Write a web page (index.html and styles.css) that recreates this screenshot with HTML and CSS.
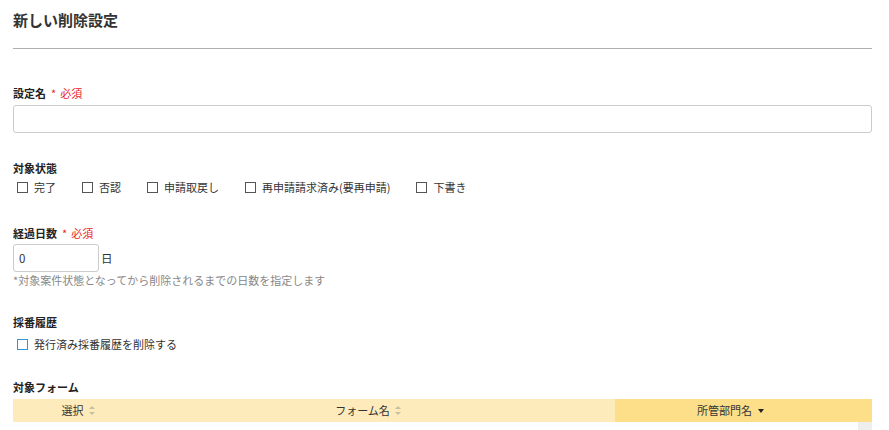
FILE: index.html
```html
<!DOCTYPE html>
<html lang="ja">
<head>
<meta charset="utf-8">
<title>新しい削除設定</title>
<link rel="stylesheet" href="styles.css">
</head>
<body>
<div class="page">
  <h1 class="title">新しい削除設定</h1>
  <hr class="divider">

  <div class="field field-name">
    <div class="label">設定名<span class="req"><span class="star">*</span>必須</span></div>
    <input class="text-input" type="text">
  </div>

  <div class="field field-status">
    <div class="label">対象状態</div>
    <div class="check-row">
      <label class="check"><span class="box"></span>完了</label>
      <label class="check"><span class="box"></span>否認</label>
      <label class="check"><span class="box"></span>申請取戻し</label>
      <label class="check"><span class="box"></span>再申請請求済み(要再申請)</label>
      <label class="check"><span class="box"></span>下書き</label>
    </div>
  </div>

  <div class="field field-days">
    <div class="label">経過日数<span class="req"><span class="star">*</span>必須</span></div>
    <div class="days-row">
      <input class="num-input" type="text" value="0"><span class="unit">日</span>
    </div>
    <div class="hint">*対象案件状態となってから削除されるまでの日数を指定します</div>
  </div>

  <div class="field field-history">
    <div class="label">採番履歴</div>
    <div class="check-row history-row">
      <label class="check"><span class="box box-focus"></span>発行済み採番履歴を削除する</label>
    </div>
  </div>

  <div class="field field-forms">
    <div class="label">対象フォーム</div>
    <div class="table-head">
      <div class="th th-select">選択<span class="sort"></span></div>
      <div class="th th-form">フォーム名<span class="sort"></span></div>
      <div class="th th-dept">所管部門名<span class="sort-desc"></span></div>
    </div>
    <div class="table-body">
      <div class="scroll-stub"></div>
    </div>
  </div>
</div>
</body>
</html>
```

FILE: styles.css
```css
* { box-sizing: border-box; }

html, body {
  margin: 0;
  padding: 0;
  background: #fff;
}

body {
  font-family: "Noto Sans CJK JP", "Noto Sans", sans-serif;
  font-size: 11px;
  color: #333;
}

.page {
  padding: 0 17px 0 13px;
}

.title {
  margin: 0;
  padding-top: 10px;
  font-size: 15px;
  line-height: 20px;
  font-weight: bold;
  color: #333;
}

.divider {
  margin: 18px 0 0;
  border: 0;
  border-top: 1px solid #aeaeae;
  height: 0;
}

.label {
  font-weight: bold;
  line-height: 16px;
  color: #222;
}

.req {
  color: #e8262a;
  font-weight: normal;
  margin-left: 5px;
}

.star {
  margin-right: 4px;
}

.field-name { margin-top: 36px; }

.text-input {
  display: block;
  width: 100%;
  height: 28px;
  margin-top: 4px;
  border: 1px solid #ccc;
  border-radius: 3px;
  padding: 0 6px;
  font: inherit;
  outline: none;
}

.field-status { margin-top: 27px; }

.check-row {
  display: flex;
  margin-top: 3px;
  padding-left: 4px;
  line-height: 16px;
}

.check {
  display: flex;
  align-items: center;
  margin-right: 26px;
  color: #333;
}

.box {
  width: 11px;
  height: 11px;
  border: 1px solid #555;
  margin-right: 6px;
  background: #fff;
}

.box-focus {
  border-color: #2f93d4;
}

.field-days { margin-top: 30px; }

.days-row {
  display: flex;
  align-items: center;
  margin-top: 3px;
}

.num-input {
  width: 86px;
  height: 28px;
  border: 1px solid #ccc;
  border-radius: 3px;
  padding: 0 5px;
  font: inherit;
  font-size: 11.5px;
  color: #333;
  outline: none;
}

.unit {
  margin-left: 2px;
  font-size: 11.5px;
}

.hint {
  line-height: 16px;
  color: #888;
}

.field-history { margin-top: 26px; }

.history-row { margin-top: 6px; }

.field-forms { margin-top: 27px; }

.table-head {
  display: flex;
  height: 23px;
  margin-top: 4px;
  background: #fdebbb;
}

.th {
  display: flex;
  align-items: center;
  justify-content: center;
  line-height: 23px;
  color: #333;
}

.th-select { width: 133px; padding-right: 2px; }
.th-form { width: 469px; padding-right: 24px; }
.th-dept { flex: 1; background: #fddf8a; padding-right: 26px; }

.sort {
  display: inline-block;
  width: 7px;
  height: 9px;
  margin-left: 5px;
  position: relative;
}
.sort::before, .sort::after {
  content: "";
  position: absolute;
  left: 0;
  border-left: 3px solid transparent;
  border-right: 3px solid transparent;
}
.sort::before { top: 0; border-bottom: 3.5px solid #c9bfa0; }
.sort::after { bottom: 0; border-top: 3.5px solid #c9bfa0; }

.sort-desc {
  display: inline-block;
  margin-left: 6px;
  border-left: 3.5px solid transparent;
  border-right: 3.5px solid transparent;
  border-top: 4px solid #222;
}

.table-body {
  display: flex;
  justify-content: flex-end;
}

.scroll-stub {
  width: 14px;
  height: 8px;
  background: #eee;
}
```
